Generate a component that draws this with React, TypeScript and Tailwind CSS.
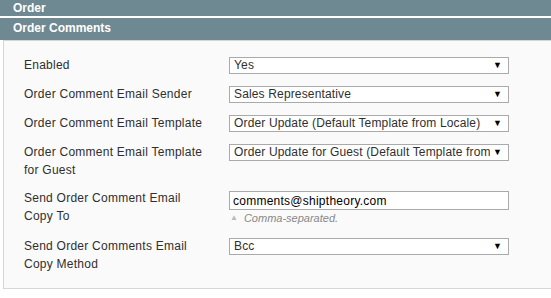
import React from "react";

const font = { fontFamily: '"Liberation Sans", Arial, sans-serif' };

function Select({ value }: { value: string }) {
  return (
    <div className="flex h-[17px] w-[280px] items-center border border-[#aaaaaa] bg-white pl-[4px] pr-[7px] text-[12px] leading-[15px] tracking-[0.15px] text-[#2f2f2f]">
      <span className="flex-1 overflow-hidden whitespace-nowrap">{value}</span>
      <span className="ml-[3px] w-[8px] text-[9px] leading-none text-black">▼</span>
    </div>
  );
}

function Row({
  label,
  children,
  h,
  off = 1,
}: {
  label: React.ReactNode;
  children: React.ReactNode;
  h: number;
  off?: number;
}) {
  return (
    <div className="flex" style={{ height: h }}>
      <div className="w-[205px] text-[12px] leading-[18px] tracking-[0.25px] text-[#2f2f2f]">{label}</div>
      <div style={{ paddingTop: off }}>{children}</div>
    </div>
  );
}

export default function App() {
  return (
    <div className="h-[298px] w-[551px] bg-white" style={font}>
      <div className="h-[16px] bg-[#6f8992] pl-[13px] text-[12px] font-bold leading-[16px] text-white">
        Order
      </div>
      <div className="h-[2px] bg-white" />
      <div className="h-[22px] bg-[#6f8992] pl-[13px] text-[12px] font-bold leading-[21px] text-white">
        Order Comments
      </div>
      <div className="ml-[3px] h-[249px] border-b border-l border-t border-[#d6d6d6] bg-[#fafafa] pl-[20px] pt-[15px]">
        <Row label="Enabled" h={29}>
          <Select value="Yes" />
        </Row>
        <Row label="Order Comment Email Sender" h={29}>
          <Select value="Sales Representative" />
        </Row>
        <Row label="Order Comment Email Template" h={29}>
          <Select value="Order Update (Default Template from Locale)" />
        </Row>
        <Row
          label={
            <>
              Order Comment Email Template
              <br />
              for Guest
            </>
          }
          h={46}
        >
          <Select value="Order Update for Guest (Default Template from Locale)" />
        </Row>
        <Row
          label={
            <>
              Send Order Comment Email
              <br />
              Copy To
            </>
          }
          h={48}
          off={2}
        >
          <div className="flex h-[19px] w-[280px] items-center border border-[#aaaaaa] bg-white pl-[3px] text-[12px] tracking-[0.25px] text-black">
            comments@shiptheory.com
          </div>
          <div className="mt-[1px] flex items-center text-[11px] italic leading-[14px] text-[#888888]">
            <span className="ml-[1px] mr-[6px] text-[8px] not-italic text-[#b4bcc0]">▲</span>
            Comma-separated.
          </div>
        </Row>
        <Row
          label={
            <>
              Send Order Comments Email
              <br />
              Copy Method
            </>
          }
          h={40}
        >
          <Select value="Bcc" />
        </Row>
      </div>
    </div>
  );
}
